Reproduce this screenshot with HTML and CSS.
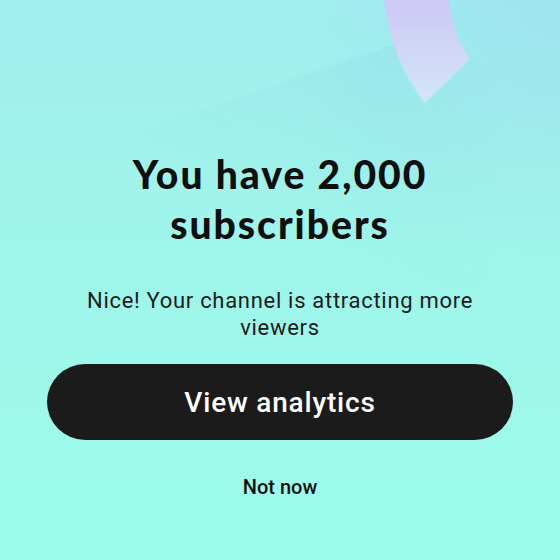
FILE: index.html
```html
<!DOCTYPE html>
<html lang="en">
<head>
<meta charset="utf-8">
<title>Milestone</title>
<link rel="stylesheet" href="styles.css">
</head>
<body>
<div class="screen">
  <svg class="backdrop" width="560" height="560" viewBox="0 0 560 560" aria-hidden="true">
    <defs>
      <linearGradient id="shade" x1="390" y1="46" x2="300" y2="220" gradientUnits="userSpaceOnUse">
        <stop offset="0" stop-color="#8cd8e4" stop-opacity="0.26"/>
        <stop offset="1" stop-color="#8cd8e4" stop-opacity="0"/>
      </linearGradient>
      <linearGradient id="fadeX" x1="380" y1="0" x2="500" y2="0" gradientUnits="userSpaceOnUse">
        <stop offset="0" stop-color="#ffffff"/>
        <stop offset="1" stop-color="#000000"/>
      </linearGradient>
      <mask id="shadeMask" maskUnits="userSpaceOnUse" x="0" y="0" width="560" height="560">
        <rect x="0" y="0" width="560" height="560" fill="url(#fadeX)"/>
      </mask>
      <linearGradient id="band" x1="0" y1="0" x2="0" y2="1">
        <stop offset="0" stop-color="#cec8f5"/>
        <stop offset="1" stop-color="#d2e6f5"/>
      </linearGradient>
      <radialGradient id="corner" cx="560" cy="0" r="260" gradientUnits="userSpaceOnUse">
        <stop offset="0" stop-color="#9bd8ef" stop-opacity="0.5"/>
        <stop offset="1" stop-color="#9bd8ef" stop-opacity="0"/>
      </radialGradient>
    </defs>
    <rect x="0" y="0" width="560" height="260" fill="url(#corner)"/>
    <polygon points="0,178 390,46 470,59 560,100 560,300 0,300" fill="url(#shade)" mask="url(#shadeMask)"/>
    <path d="M384 0 Q392 62 425 103 L470 59 Q452 34 449 0 Z" fill="url(#band)"/>
  </svg>
  <main class="content">
    <h1 class="title">You have 2,000<br>subscribers</h1>
    <p class="message">Nice! Your channel is attracting more<br>viewers</p>
    <button class="primary" type="button">View analytics</button>
    <button class="secondary" type="button">Not now</button>
  </main>
</div>
</body>
</html>
```

FILE: styles.css
```css
html, body {
  margin: 0;
  padding: 0;
}

.screen {
  position: relative;
  width: 560px;
  height: 560px;
  overflow: hidden;
  background: linear-gradient(180deg, #a1eeef 0%, #9ff4eb 35%, #9cfcea 100%);
}

.backdrop {
  position: absolute;
  left: 0;
  top: 0;
}

.content {
  position: relative;
  display: flex;
  flex-direction: column;
  align-items: center;
  padding: 149px 40px 0;
}

.title {
  margin: 0;
  font-family: Lato, "Open Sans", sans-serif;
  font-weight: 900;
  font-size: 39px;
  line-height: 50px;
  color: #0f0f0f;
  text-align: center;
  letter-spacing: 2px;
}

.message {
  margin: 38px 0 0;
  font-family: Roboto, "Liberation Sans", sans-serif;
  font-weight: 400;
  font-size: 22px;
  line-height: 27px;
  letter-spacing: 0.7px;
  color: #1c1c1c;
  text-align: center;
}

.primary {
  margin-top: 23px;
  width: 466px;
  height: 76px;
  border: 0;
  border-radius: 38px;
  background: #1b1b1b;
  color: #ffffff;
  font-family: Roboto, "Liberation Sans", sans-serif;
  font-weight: 500;
  font-size: 28px;
  letter-spacing: 0.8px;
  padding: 0;
}

.secondary {
  margin-top: 35px;
  border: 0;
  background: none;
  padding: 0;
  color: #0f0f0f;
  font-family: Roboto, "Liberation Sans", sans-serif;
  font-weight: 500;
  font-size: 20px;
  line-height: 24px;
}
```
